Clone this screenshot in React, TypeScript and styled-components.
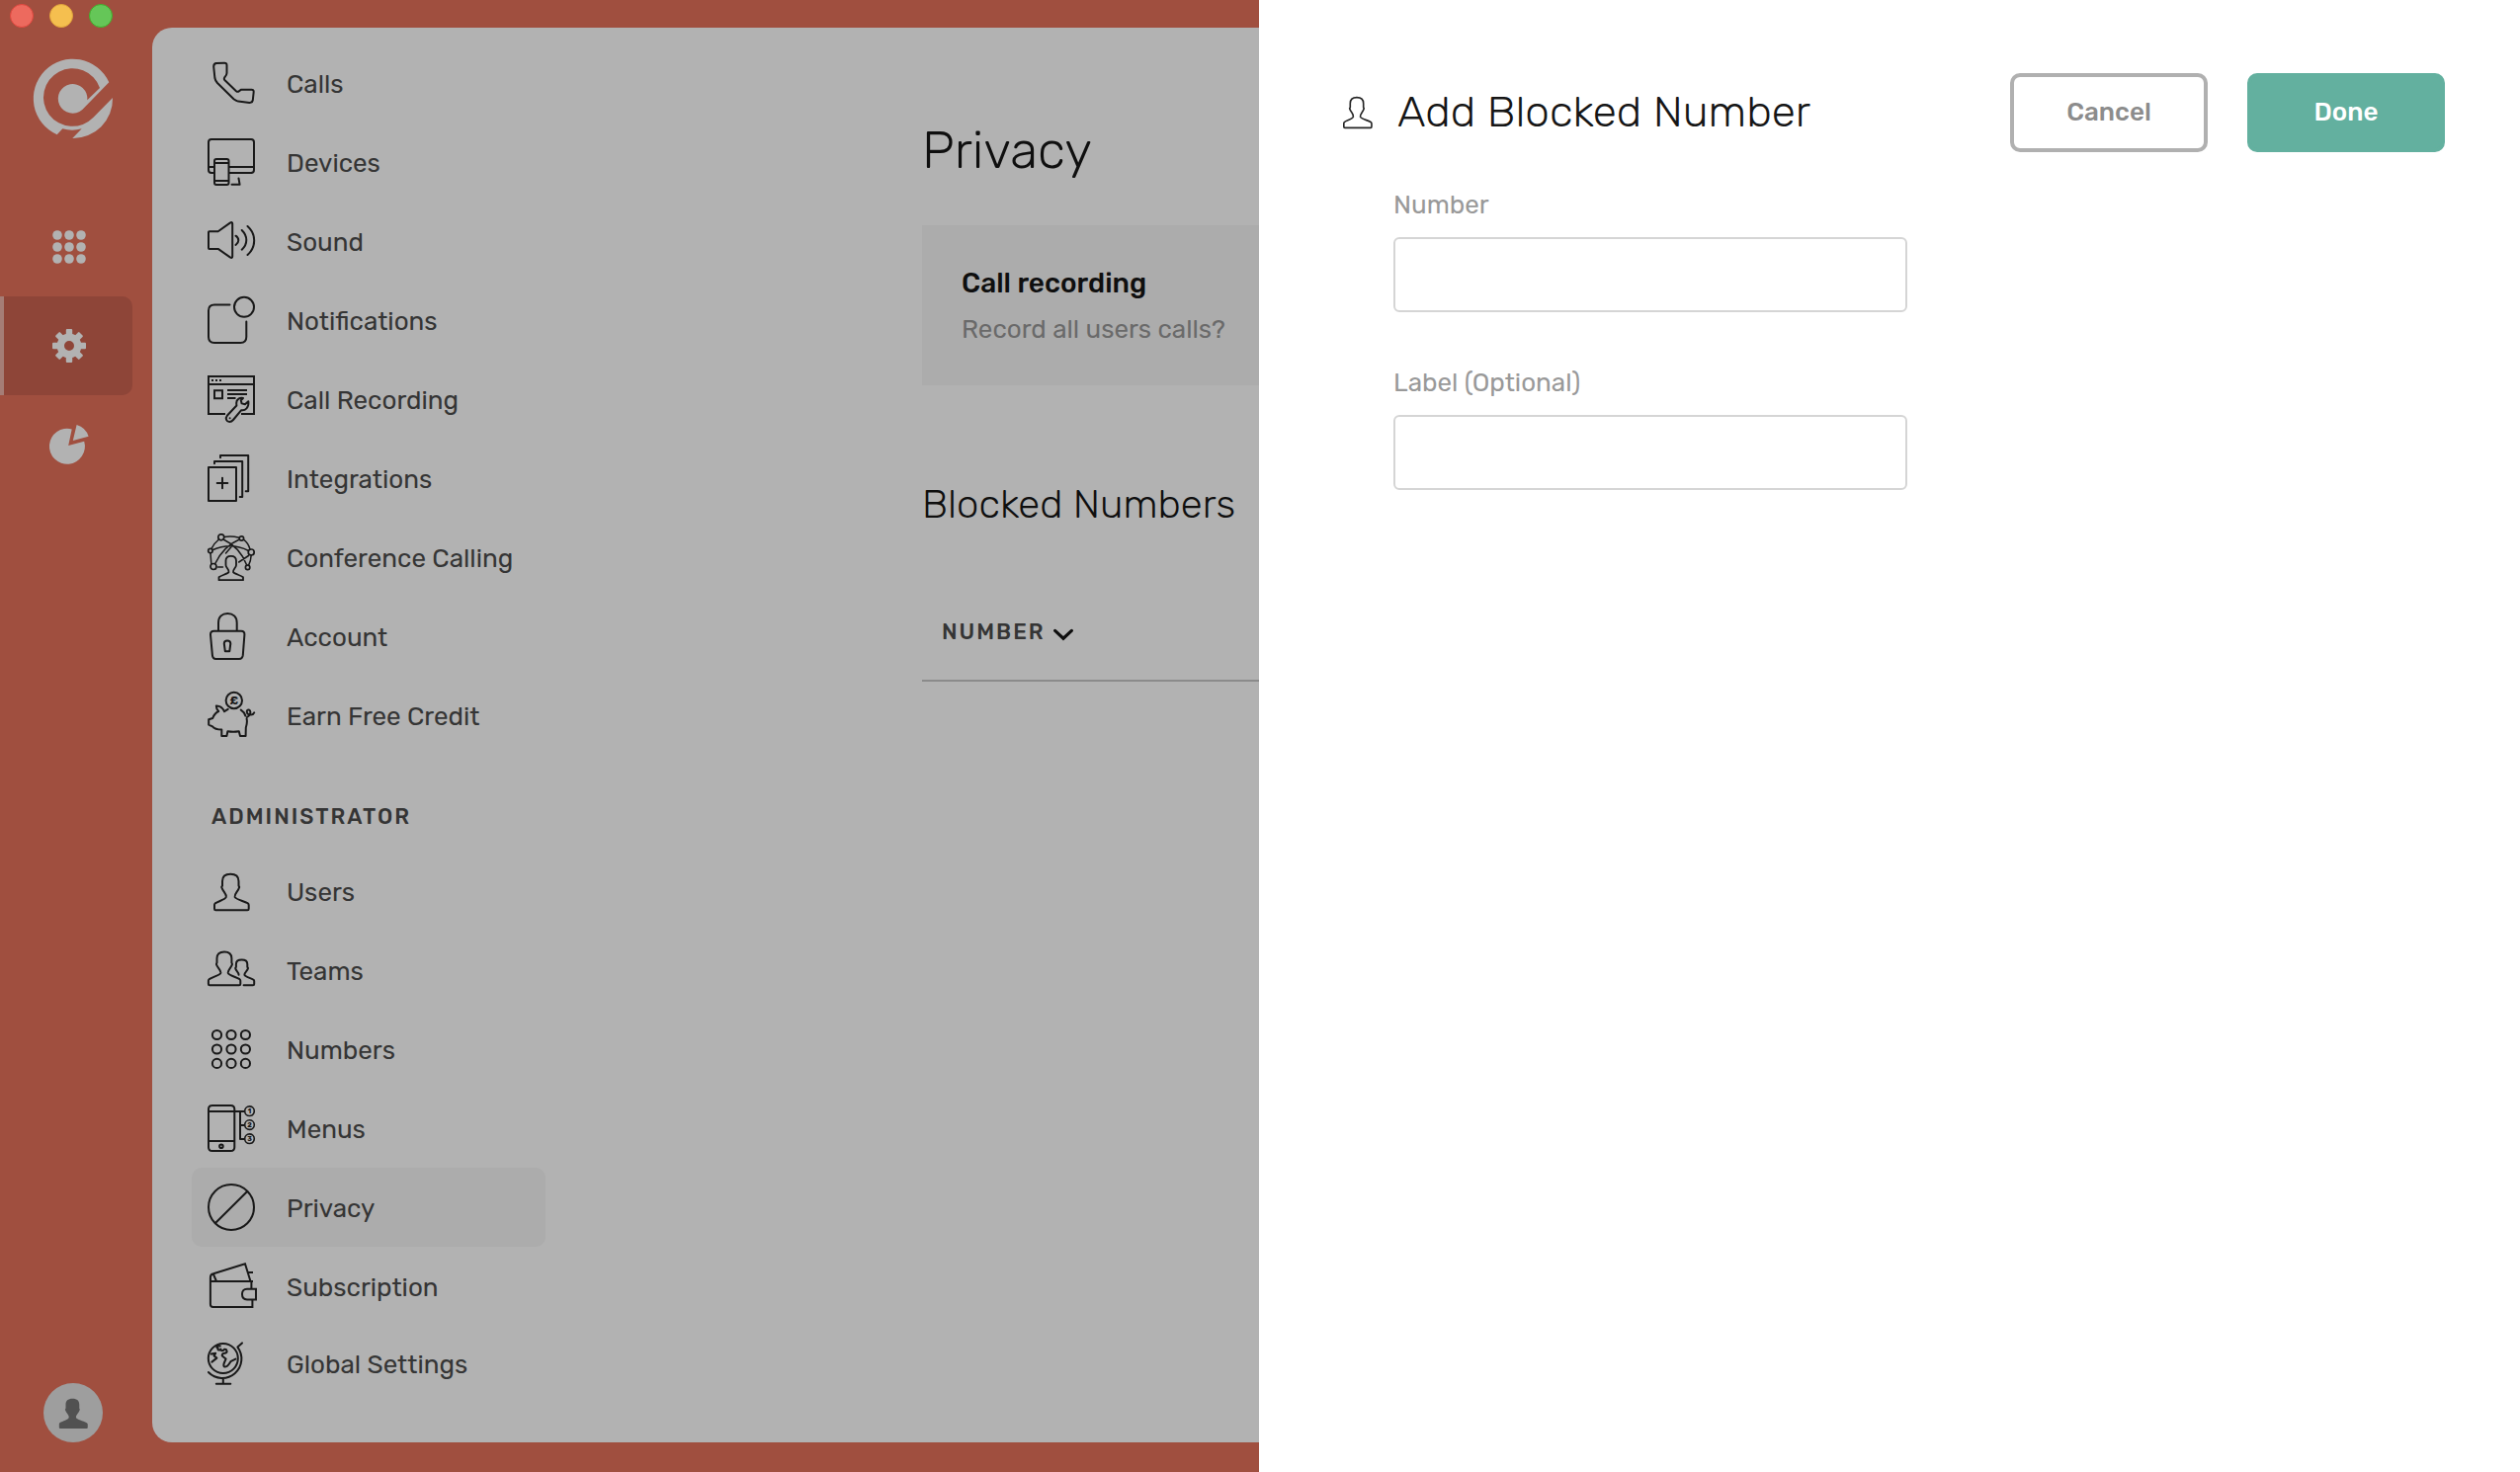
import React from "react";
import styled, { createGlobalStyle } from "styled-components";

const GlobalStyle = createGlobalStyle`
  *, *::before, *::after { box-sizing: border-box; }
  body {
    margin: 0;
    font-family: Rubik, Roboto, sans-serif;
    font-size: 26px;
    line-height: 32px;
    color: #161616;
    background: #e6715b;
  }
  h1, h2, h3, p, ul { margin: 0; padding: 0; font-weight: 400; }
  ul { list-style: none; }
  a { color: inherit; text-decoration: none; }
  button, input { font: inherit; color: inherit; }
`;

/* ---------- shell ---------- */

const Window = styled.div`
  display: flex;
  min-height: 100vh;
  overflow: hidden;
  background: #e6715b;
`;

const Lights = styled.div`
  position: fixed;
  top: 4px;
  left: 10px;
  z-index: 2;
  display: flex;
  gap: 16px;
`;

const Light = styled.span<{ $color: string; $edge: string }>`
  width: 24px;
  height: 24px;
  border-radius: 50%;
  border: 1px solid ${(p) => p.$edge};
  background: ${(p) => p.$color};
`;

const Rail = styled.header`
  display: flex;
  flex-direction: column;
  flex: none;
  width: 154px;
  padding: 60px 0 30px;
  color: #fff;
`;

const Brand = styled.a`
  display: block;
  width: 80px;
  height: 80px;
  margin: 0 0 60px 34px;
`;

const RailNav = styled.nav`
  display: flex;
  flex-direction: column;
  width: 134px;
`;

const RailLink = styled.a<{ $active?: boolean }>`
  display: flex;
  align-items: center;
  justify-content: center;
  height: 100px;
  padding-right: ${(p) => (p.$active ? 0 : 4)}px;
  padding-left: ${(p) => (p.$active ? 2 : 10)}px;
  border-left: ${(p) => (p.$active ? "4px solid #edb4aa" : "0")};
  border-radius: 0 10px 10px 0;
  background: ${(p) => (p.$active ? "#cc6351" : "transparent")};
`;

const Avatar = styled.button`
  display: flex;
  align-items: center;
  justify-content: center;
  width: 60px;
  height: 60px;
  margin: auto 0 0 44px;
  padding: 0;
  border: 0;
  border-radius: 50%;
  background: #e2e2e2;
  color: #757575;
`;

const Page = styled.div`
  display: flex;
  flex: 1;
  min-width: 0;
  margin: 28px 0 30px;
  border-radius: 20px 0 0 20px;
  background: #fff;
`;

/* ---------- settings menu ---------- */

const Menu = styled.nav`
  flex: none;
  width: 398px;
  padding: 16px 0 40px 40px;
`;

const MenuLink = styled.a<{ $active?: boolean }>`
  display: flex;
  align-items: center;
  gap: 32px;
  padding: 16px;
  border-radius: 10px;
  color: #4d4d4d;
  background: ${(p) => (p.$active ? "#f6f6f6" : "transparent")};
`;

const MenuLabel = styled.span`
  padding-top: 3px;
`;

const MenuHeading = styled.h2`
  padding: 49px 20px 21px;
  font-size: 22px;
  line-height: 28px;
  font-weight: 500;
  letter-spacing: 2px;
  text-transform: uppercase;
  color: #4d4d4d;
`;

const Glyph = styled.svg`
  display: block;
  flex: none;
  overflow: visible;
  fill: none;
  stroke: #242424;
  stroke-width: 2;
  stroke-linecap: round;
  stroke-linejoin: round;
  text {
    fill: #242424;
    stroke: none;
    font-weight: 700;
    text-anchor: middle;
  }
`;

const Solid = styled.svg`
  display: block;
  overflow: visible;
  fill: currentColor;
`;

/* ---------- main ---------- */

const Main = styled.main`
  flex: 1;
  min-width: 0;
  padding: 92px 0 0 381px;
`;

const PageTitle = styled.h1`
  font-size: 52px;
  line-height: 64px;
  font-weight: 300;
`;

const Card = styled.section`
  margin-top: 44px;
  padding: 41px 40px 40px;
  background: #f7f7f7;
`;

const CardTitle = styled.h2`
  font-size: 28px;
  line-height: 36px;
  font-weight: 500;
`;

const CardText = styled.p`
  margin-top: 13px;
  color: #999;
`;

const SectionTitle = styled.h2`
  margin-top: 97px;
  font-size: 40px;
  line-height: 48px;
  font-weight: 300;
`;

const Table = styled.table`
  width: 100%;
  margin-top: 62px;
  border-collapse: collapse;
  border-bottom: 2px solid #c8c8c8;
`;

const HeadCell = styled.th`
  height: 92px;
  padding: 0 20px 6px;
  text-align: left;
`;

const SortButton = styled.button`
  display: flex;
  align-items: center;
  gap: 8px;
  padding: 0;
  border: 0;
  background: none;
  font-size: 22px;
  line-height: 28px;
  font-weight: 500;
  letter-spacing: 2px;
  color: #4d4d4d;
  svg {
    margin-top: 4px;
  }
`;

/* ---------- drawer ---------- */

const Backdrop = styled.div`
  position: fixed;
  inset: 0;
  z-index: 1;
  background: rgba(0, 0, 0, 0.3);
`;

const Drawer = styled.form`
  position: fixed;
  top: 0;
  right: 0;
  bottom: 0;
  z-index: 3;
  width: calc(50% + 1px);
  padding: 74px 76px 40px 85px;
  background: #fff;
`;

const DrawerBar = styled.div`
  display: flex;
  align-items: center;
  gap: 25px;
`;

const DrawerTitle = styled.h2`
  flex: 1;
  padding-bottom: 3px;
  font-size: 44px;
  line-height: 56px;
  font-weight: 300;
`;

const Actions = styled.div`
  display: flex;
  gap: 40px;
`;

const Action = styled.button<{ $primary?: boolean }>`
  width: 200px;
  height: 80px;
  padding: 0;
  border: 4px solid ${(p) => (p.$primary ? "#63b09f" : "#b0b0b0")};
  border-radius: 10px;
  background: ${(p) => (p.$primary ? "#63b09f" : "#fff")};
  color: ${(p) => (p.$primary ? "#fff" : "#8c8c8c")};
  font-weight: 500;
`;

const Fields = styled.div`
  display: flex;
  flex-direction: column;
  gap: 56px;
  padding: 38px 0 0 51px;
`;

const Field = styled.label`
  display: flex;
  flex-direction: column;
  gap: 16px;
  max-width: 520px;
  color: #999;
`;

const TextInput = styled.input`
  width: 100%;
  height: 76px;
  padding: 0 20px;
  border: 2px solid #d5d5d5;
  border-radius: 6px;
  outline: none;
  background: #fff;
  color: #161616;
`;

/* ---------- drawings ---------- */

const personPath =
  "M23.2 6.8C17.5 6.8 15 9.5 15 14V18.5L14.2 20C15.5 24.5 19.5 26.5 18.8 30C18 32.5 11.5 34 7.7 36.4Q7 37 7 38V42Q7 43.3 8.3 43.3H40.4Q41.7 43.3 41.7 42V38Q41.7 37 40.5 36.2C36 34 28.5 32.3 27.6 30C27 26.5 31 24.5 32.2 20L31.5 18.5V14C31.5 9.5 29 6.8 23.2 6.8Z";

const drawings: Record<string, React.ReactNode> = {
  calls: (
    <path d="M6.2 7.5C6.2 5 7 4.2 9 4.1L17 3.7Q19.5 3.6 19.5 6V14Q19.5 16 17.2 18.5Q16.3 20 17.6 21.3L29 32.2Q30.5 33.4 32 32.2L34.2 30.7H44.5Q46.8 30.7 46.7 33L45.8 41.5Q45.3 44 42.5 44L31 42.6Q28.5 42 26.5 40.3L10 24Q7.8 21.5 7.4 19Z" />
  ),
  devices: (
    <path d="M7 35H4Q1 35 1 32V4Q1 1 4 1H44Q47 1 47 4V32Q47 35 44 35H22M1 29H7M22 29H47M9 21H19.5Q21.5 21 21.5 23V45Q21.5 47 19.5 47H9Q7 47 7 45V23Q7 21 9 21ZM7 25H21.5M7 43H21.5M31.5 40.5L32.6 46.8H24.5" />
  ),
  sound: (
    <path d="M1.8 14.2H10.7L22.8 5.6Q25.2 4.2 25.2 6.5V39.5Q25.2 41.8 22.8 40.4L10.7 31.9H1.8Q1 31.9 1 31V15Q1 14.2 1.8 14.2ZM28.5 18.7Q31.3 20.5 31.3 23.2T28.5 28M34.7 13Q39.3 17.5 39.3 23T34.7 32.7M40.5 9Q47.2 15 47.2 23.5T40.5 38" />
  ),
  notifications: (
    <>
      <circle cx="37" cy="10.8" r="10" />
      <path d="M22.5 8.6H7Q1 8.6 1 14.6V41Q1 47 7 47H33.3Q39.3 47 39.3 41V25.5" />
    </>
  ),
  recording: (
    <>
      <path
        strokeLinejoin="miter"
        strokeLinecap="butt"
        d="M18 39H1V1H47V39H34M1 8.9H47M7 15.2H15V23.2H7ZM20 15H40M20 19H40M20 23H28.5M4 5H6M8 5H10M12 5H14"
      />
      <path d="M36 23C33 22.2 29.2 24 29.2 28L29.4 30.5L19.8 40.8C17.6 43.4 19.3 47 22.2 47C24 47 25 46.2 26 45L34.2 35.2C38 36 42.3 32.5 41.3 26.2L38 29.3L34.6 28.4L33.8 25.3ZM22.6 43.2V43.3" />
    </>
  ),
  integrations: (
    <path d="M1 13H29V47H1ZM15 23.7V34.3M9.7 29H20.3M7 9.3V7H35.2V43H32.7M13 3.3V1H41.2V37.2H38.7" />
  ),
  conference: (
    <>
      <g strokeWidth="1.7">
        <circle cx="13.8" cy="3.8" r="3" />
        <circle cx="34.4" cy="5" r="2.2" />
        <circle cx="2.9" cy="17.6" r="2.2" />
        <circle cx="44.2" cy="19" r="3" />
        <circle cx="6" cy="33.5" r="3" />
        <circle cx="40.6" cy="34.4" r="2.2" />
      </g>
      <path
        strokeWidth="1.5"
        d="M17 3.5Q24 2 32 4.2M11.5 6Q6.5 10 4 15.4M36.5 6.2Q41 9.5 43 16M3 20L3.8 30.5M44.2 22Q43.8 28 41.6 32.2M5 16.7Q24 8.5 41.5 17.5M16 6Q33 14 39.8 32.2M32.3 6Q16 13 7.6 30.7M18.5 20L25 12.4M31.7 29L41.5 22.5M10.5 34H15.5"
      />
      <path
        strokeWidth="1.8"
        d="M23.7 22.8C20 22.8 18.5 25 18.5 27.5V32C18.5 34.5 22 36.5 21.5 39C20.5 41 14.5 42 11.5 44.2V47.2H36V44.2C33 42 27 41 26 39C25.5 36.5 29 34.5 29 32V27.5C29 25 27.5 22.8 23.7 22.8Z"
      />
    </>
  ),
  account: (
    <path d="M11 17.5V10.5C11 4.5 14.7 1 20.3 1S29.7 4.5 29.7 10.5V17.5M6.5 18.8H34Q37.7 18.8 37.4 22.5L35.8 43.2Q35.4 47 32 47H8.5Q5.2 47 4.9 43.2L3 22.5Q2.8 18.8 6.5 18.8ZM17.8 39.2L16.8 31.5Q16.8 28.6 20 28.6T23.3 31.5L22.3 39.2Z" />
  ),
  credit: (
    <>
      <circle cx="26.8" cy="9" r="8.2" />
      <text x="26.8" y="13.4" fontSize="12">£</text>
      <path d="M20.7 17.8L17 20.2C15.5 17 12.5 14.5 8.8 14.6C8.8 17 9.6 18.5 11.2 20C8.5 21.2 6.5 23.5 5.2 27L1.2 28.3V33.6L5 35.4C7 38 11 38.6 14.3 38.6V45H19.4L20.4 40.2Q26 41.2 31.8 40.2L33 45H38.6L38.8 36.5C39.8 33.5 40.2 30 39.6 27.5M33.8 18.6C36 20 37.6 22.2 38.4 24.6M40 26C43.5 24 44.5 19.5 41.8 18.5C39 18 39.3 22 41.5 23C44.5 24 46.5 23 47.2 21.3" />
    </>
  ),
  users: <path d={personPath} />,
  teams: (
    <path d="M17 5.4C11.8 5.4 9.5 8 9.5 12V16.4L8.9 18C10 22 14 23.7 13.3 27C12.5 29.2 5 31 1.7 33.2Q.9 33.8 .9 34.8V38Q.9 39.3 2.2 39.3H32Q33.3 39.3 33.3 38V34.8Q33.3 33.8 32.5 33.2C29 31 21.5 29.2 20.8 27C20.2 23.7 24 22 25 18L24.4 16.4V12C24.4 8 22.2 5.4 17 5.4ZM31.6 28.7C31.5 26 28.6 25 28.2 22L28.9 20.7V18C28.9 15.2 31 13.6 34.6 13.6S40.3 15.2 40.3 18V20.7L41 22C40.5 25 37.3 26 37.4 28.8C38 31 44 32 46.4 33.7Q47.2 34.2 47.2 35V38Q47.2 39.3 46 39.3H36.6" />
  ),
  numbers: (
    <>
      {[9.5, 24, 38.4].map((y) =>
        [9.5, 24, 38.4].map((x) => <circle key={`${x}-${y}`} cx={x} cy={y} r="4.6" />)
      )}
    </>
  ),
  menus: (
    <>
      <path
        strokeLinecap="butt"
        d="M4.5 1H23.5Q27.3 1 27.3 4.8V43.2Q27.3 47 23.5 47H4.8Q1 47 1 43.2V4.8Q1 1 4.8 1ZM1 7H37.5M1 37H27.3M33 7V35H37.5M33 21H37.5"
      />
      <circle cx="13.9" cy="42.2" r="1.8" />
      {[6.7, 20.6, 34.7].map((y, i) => (
        <g key={y} strokeWidth="1.6">
          <circle cx="42.5" cy={y} r="4.8" />
          <text x="42.5" y={y + 2.6} fontSize="7">{i + 1}</text>
        </g>
      ))}
    </>
  ),
  privacy: (
    <>
      <circle cx="24" cy="24" r="23" />
      <path d="M40.2 8L8 40" />
    </>
  ),
  subscription: (
    <path
      strokeLinecap="butt"
      strokeLinejoin="miter"
      d="M44.4 19V26.7M45.4 37.4V45H5.5Q2.9 45 2.9 42.3V15Q2.9 11.8 6 11.2L38 1.2L43.5 19M3 16V19H46M6 11.8L9 19M41 9.9H46M49 26.8V37.4H40Q35 37.4 35 32.1T40 26.8Z"
    />
  ),
  globe: (
    <>
      <circle cx="15.8" cy="17" r="15" />
      <path d="M35 1.4L30.4 5.6A19.5 19.5 0 0 1 .9 31M15.8 38V42.8M8.8 42.8H23.3M3.6 12.6L8.2 11.8L6.6 14.4L9.4 16.6L4.4 20.6M12.8 4.4C9.4 4 8 6.2 10.6 6.4C9.6 8.8 12.2 9.2 13.4 7.6C13.4 10 16 9.6 17 7.8C19.8 7.4 20.8 11 17.6 11.8C15 11.4 13.6 14.2 16 15.4L18.6 17.6C17.2 20.6 15 24.6 17.4 25.6C20.4 25.6 21.6 23 23.4 20.2L28.4 17.6" />
    </>
  ),
};

function Icon({ name, height = 48 }: { name: string; height?: number }) {
  return (
    <Glyph width="48" height={height} viewBox={`0 0 48 ${height}`} aria-hidden="true">
      {drawings[name]}
    </Glyph>
  );
}

const personal = [
  ["calls", "Calls"],
  ["devices", "Devices"],
  ["sound", "Sound"],
  ["notifications", "Notifications"],
  ["recording", "Call Recording"],
  ["integrations", "Integrations"],
  ["conference", "Conference Calling"],
  ["account", "Account"],
  ["credit", "Earn Free Credit"],
];

const administrator = [
  ["users", "Users"],
  ["teams", "Teams"],
  ["numbers", "Numbers"],
  ["menus", "Menus"],
  ["privacy", "Privacy"],
  ["subscription", "Subscription"],
  ["globe", "Global Settings"],
];

function MenuList({ items }: { items: string[][] }) {
  return (
    <ul>
      {items.map(([icon, label]) => (
        <li key={icon}>
          <MenuLink href={`#${icon}`} $active={icon === "privacy"}>
            <Icon name={icon} height={icon === "globe" ? 44 : 48} />
            <MenuLabel>{label}</MenuLabel>
          </MenuLink>
        </li>
      ))}
    </ul>
  );
}

export default function App() {
  return (
    <>
      <GlobalStyle />
      <Window>
        <Lights>
          <Light $color="#ed6a5e" $edge="#e0473e" />
          <Light $color="#f5bf4f" $edge="#e0a33a" />
          <Light $color="#65c658" $edge="#3fae2b" />
        </Lights>
        <Rail>
          <Brand href="#home" aria-label="Home">
            <Solid width="80" height="80" viewBox="0 0 80 80">
              <path d="M76.3 23.3A40 40 0 1 0 23.7 76.3L29.3 70.3Q39 73.2 48.7 70.3L39.3 80A40 40 0 0 0 80 39L60.3 59A29.3 29.3 0 1 1 67 29L54.3 41.3A14.8 14.8 0 1 0 49.3 51Z" />
            </Solid>
          </Brand>
          <RailNav>
            <RailLink href="#dialpad" aria-label="Dialpad">
              <Solid width="34" height="34" viewBox="0 0 34 34">
                {[5, 17, 29].map((y) =>
                  [5, 17, 29].map((x) => <circle key={`${x}-${y}`} cx={x} cy={y} r="4.8" />)
                )}
              </Solid>
            </RailLink>
            <RailLink href="#settings" aria-label="Settings" $active>
              <Solid width="34" height="34" viewBox="-17 -17 34 34">
                <circle r="8.7" fill="none" stroke="currentColor" strokeWidth="7.4" />
                {[0, 45, 90, 135, 180, 225, 270, 315].map((a) => (
                  <rect key={a} x="-3.2" y="-17" width="6.4" height="7" rx="1" transform={`rotate(${a})`} />
                ))}
              </Solid>
            </RailLink>
            <RailLink href="#reports" aria-label="Reports">
              <Solid width="40" height="40" viewBox="0 0 40 40">
                <path d="M22.7 4.4A18 18 0 1 0 35.2 16.7L19.2 21ZM27.6 0A18 18 0 0 1 39.6 11.7L23.8 16.1Z" />
              </Solid>
            </RailLink>
          </RailNav>
          <Avatar type="button" aria-label="Profile">
            <Solid width="40" height="40" viewBox="0 0 48 48">
              <path d={personPath} />
            </Solid>
          </Avatar>
        </Rail>
        <Page>
          <Menu aria-label="Settings">
            <MenuList items={personal} />
            <MenuHeading>Administrator</MenuHeading>
            <MenuList items={administrator} />
          </Menu>
          <Main>
            <PageTitle>Privacy</PageTitle>
            <Card>
              <CardTitle>Call recording</CardTitle>
              <CardText>Record all users calls?</CardText>
            </Card>
            <SectionTitle>Blocked Numbers</SectionTitle>
            <Table>
              <thead>
                <tr>
                  <HeadCell scope="col">
                    <SortButton type="button">
                      NUMBER
                      <Solid width="20" height="12" viewBox="0 0 20 12" aria-hidden="true">
                        <path
                          d="M1.6 2.4L10 10.2L18.4 2.4"
                          fill="none"
                          stroke="#161616"
                          strokeWidth="3.2"
                          strokeLinecap="round"
                        />
                      </Solid>
                    </SortButton>
                  </HeadCell>
                </tr>
              </thead>
            </Table>
          </Main>
        </Page>
      </Window>
      <Backdrop />
      <Drawer onSubmit={(e) => e.preventDefault()}>
        <DrawerBar>
          <Glyph width="30" height="32" viewBox="6 6 37 38" preserveAspectRatio="none" aria-hidden="true">
            <path d={personPath} />
          </Glyph>
          <DrawerTitle>Add Blocked Number</DrawerTitle>
          <Actions>
            <Action type="button">Cancel</Action>
            <Action type="submit" $primary>
              Done
            </Action>
          </Actions>
        </DrawerBar>
        <Fields>
          <Field>
            Number
            <TextInput type="tel" name="number" />
          </Field>
          <Field>
            Label (Optional)
            <TextInput type="text" name="label" />
          </Field>
        </Fields>
      </Drawer>
    </>
  );
}
